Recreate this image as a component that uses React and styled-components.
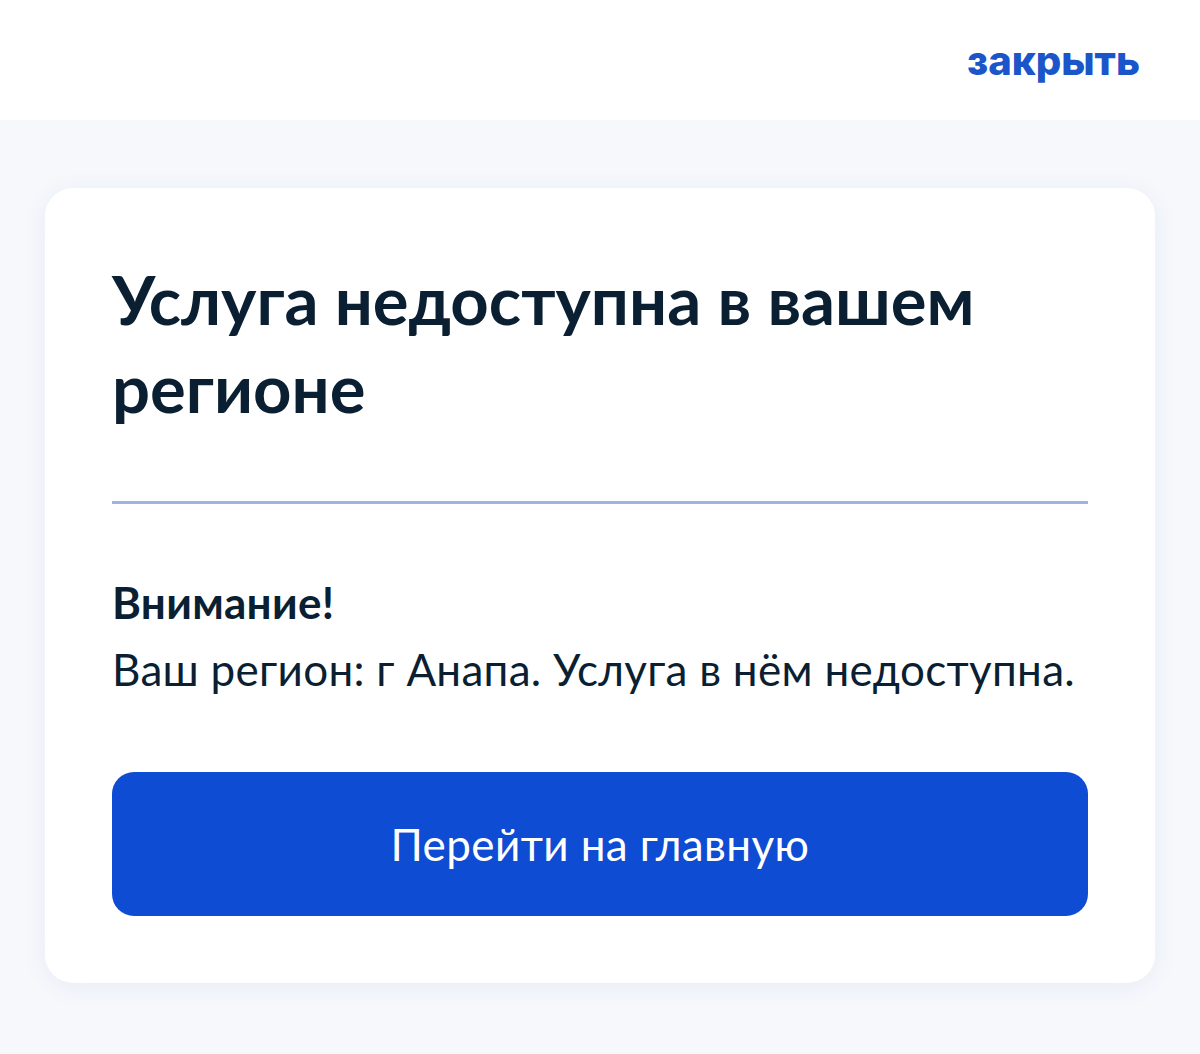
import React from 'react';
import styled, { createGlobalStyle } from 'styled-components';

const GlobalStyle = createGlobalStyle`
  html, body {
    margin: 0;
    padding: 0;
    background: #f6f8fc;
  }
  body {
    font-family: Lato, "Noto Sans", sans-serif;
    color: #0b1f33;
  }
`

const Page = styled.div`
  min-height: 1054px;
  display: flex;
  flex-direction: column;
`

const Header = styled.header`
  height: 120px;
  background: #ffffff;
  display: flex;
  align-items: center;
  justify-content: flex-end;
  padding: 0 60px;
  box-sizing: border-box;
`

const CloseLink = styled.a`
  font-family: Inter, "Noto Sans", sans-serif;
  font-weight: 800;
  font-size: 40px;
  color: #1a56c9;
  text-decoration: none;
  cursor: pointer;
`

const Main = styled.main`
  padding: 68px 45px 0;
`

const Card = styled.section`
  background: #ffffff;
  border-radius: 28px;
  box-shadow: 0 4px 24px rgba(40, 70, 160, 0.07);
  padding: 67px 67px 67px;
`

const Title = styled.h1`
  margin: 0;
  font-size: 67px;
  font-weight: 700;
  line-height: 88px;
`

const Divider = styled.hr`
  border: none;
  height: 3px;
  background: #9fb3e6;
  margin: 70px 0 70px;
`

const Label = styled.div`
  font-size: 44px;
  font-weight: 700;
  line-height: 56px;
  letter-spacing: 0.3px;
`

const Text = styled.p`
  margin: 8px 0 0;
  font-size: 44px;
  line-height: 62px;
  letter-spacing: 0.3px;
`

const Button = styled.button`
  display: block;
  width: 100%;
  height: 144px;
  margin-top: 72px;
  border: none;
  border-radius: 22px;
  background: #0d4cd3;
  color: #ffffff;
  font-family: Lato, "Noto Sans", sans-serif;
  font-size: 44px;
  letter-spacing: 0.4px;
  cursor: pointer;
`

export default function App() {
  return (
    <Page>
      <GlobalStyle />
      <Header>
        <CloseLink>закрыть</CloseLink>
      </Header>
      <Main>
        <Card>
          <Title>Услуга недоступна в вашем регионе</Title>
          <Divider />
          <Label>Внимание!</Label>
          <Text>Ваш регион: г Анапа. Услуга в нём недоступна.</Text>
          <Button>Перейти на главную</Button>
        </Card>
      </Main>
    </Page>
  )
}
